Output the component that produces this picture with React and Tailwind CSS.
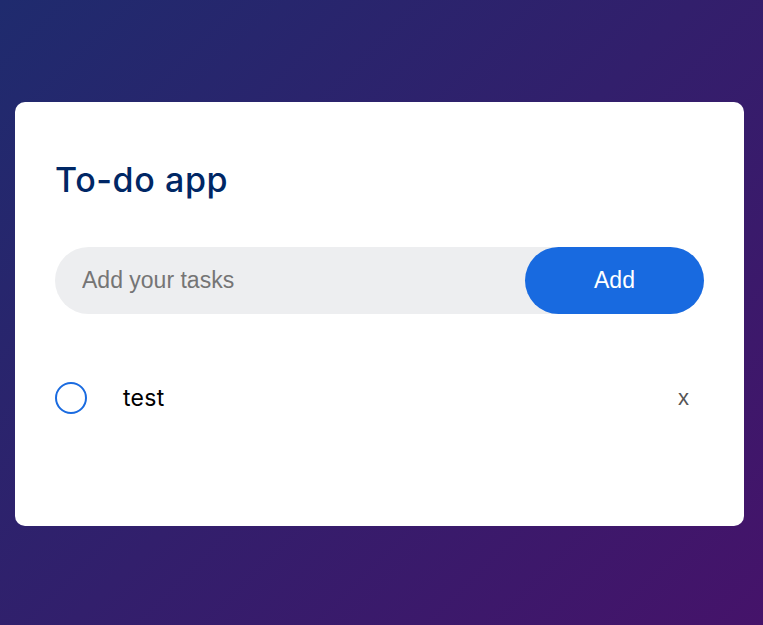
import React, { useState } from 'react';

const App = () => {
  const [tasks, setTasks] = useState([{ id: 1, text: 'test', done: false }]);
  const [value, setValue] = useState('');

  const addTask = () => {
    if (!value.trim()) return;
    setTasks([...tasks, { id: Date.now(), text: value, done: false }]);
    setValue('');
  };

  return (
    <div className="min-h-[625px] w-full bg-[linear-gradient(135deg,#1f2b6e,#45136a)] pt-[102px] pb-[20px]">
      <div className="mx-[15px] w-[729px] rounded-[10px] bg-white px-[40px] pt-[56px] pb-[94px]">
        {/* title */}
        <h2 className="font-['Inter',sans-serif] text-[34px] font-medium leading-[44px] tracking-[0.6px] text-[#002765]">
          To-do app
        </h2>

        <div className="mt-[45px] mb-[50px] flex h-[67px] items-center rounded-full bg-[#edeef0]">
          <input
            value={value}
            onChange={(e) => setValue(e.target.value)}
            placeholder="Add your tasks"
            className="h-full flex-1 bg-transparent pl-[27px] font-['Liberation_Sans',Arial,sans-serif] text-[23px] text-gray-800 outline-none placeholder:text-[#757575]"
          />
          <button
            onClick={addTask}
            className="h-full w-[179px] rounded-full bg-[#186ae0] font-['Liberation_Sans',Arial,sans-serif] text-[23px] text-white"
          >
            Add
          </button>
        </div>

        <ul>
          {tasks.map((t) => (
            <li key={t.id} className="flex h-[68px] items-center">
              <button
                onClick={() => setTasks(tasks.map((x) => (x.id === t.id ? { ...x, done: !x.done } : x)))}
                className="h-[32px] w-[32px] shrink-0 rounded-full border-2 border-[#1a6be0]"
              />
              <span className={`ml-[36px] flex-1 font-['Inter',sans-serif] text-[23px] tracking-[0.3px] text-black ${t.done ? 'line-through text-gray-500' : ''}`}>
                {t.text}
              </span>
              <button
                onClick={() => setTasks(tasks.filter((x) => x.id !== t.id))}
                className="mr-[15px] font-['Liberation_Sans',Arial,sans-serif] text-[22px] leading-none text-[#555]"
              >
                x
              </button>
            </li>
          ))}
        </ul>
      </div>
    </div>
  );
};

export default App;
